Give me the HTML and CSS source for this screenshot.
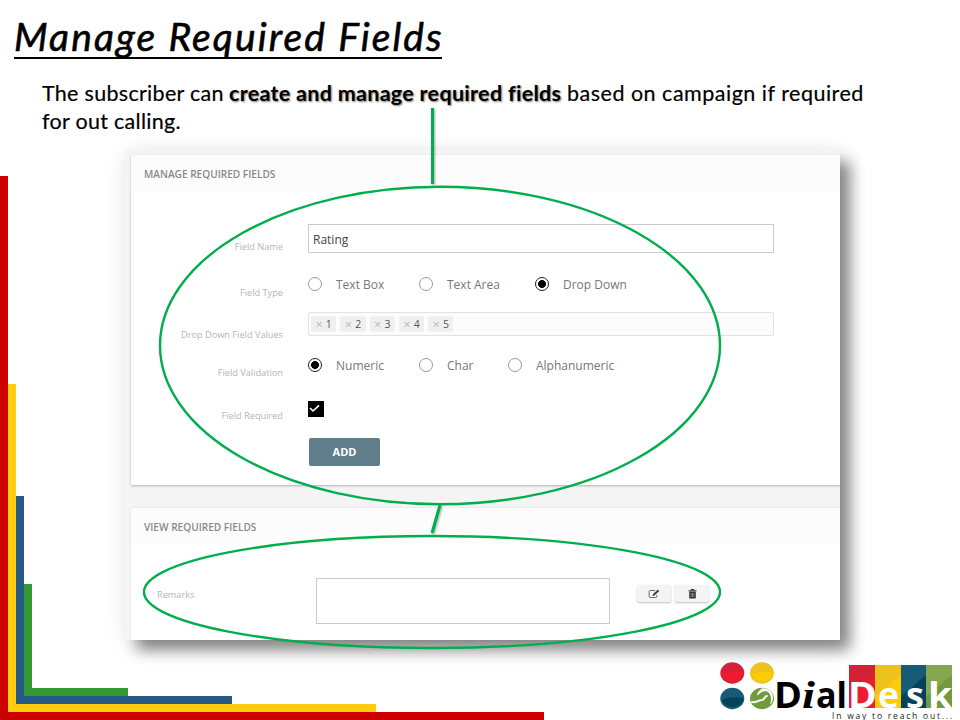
FILE: index.html
```html
<!DOCTYPE html>
<html lang="en">
<head>
<meta charset="utf-8">
<title>Manage Required Fields</title>
<link rel="stylesheet" href="styles.css">
</head>
<body>
<div class="slide">
  <main class="content">
    <h1 class="title"><span>Manage Required Fields</span></h1>
    <div class="intro">
      <p class="line first"><span class="i1">The subscriber can</span><strong>create and manage required fields</strong><span class="i3">based on campaign if required</span></p>
      <p class="line"><span class="i4">for out calling.</span></p>
    </div>
    <div class="shot">
      <section class="card">
        <h2 class="card-head"><span class="h-manage">MANAGE REQUIRED FIELDS</span></h2>
        <div class="form">
          <div class="row r-name"><label>Field Name</label><div class="input">Rating</div></div>
          <div class="row r-type"><label>Field Type</label>
            <div class="radios"><i class="radio"></i><span class="o1">Text Box</span><i class="radio"></i><span class="o2">Text Area</span><i class="radio on"></i><span>Drop Down</span></div></div>
          <div class="row r-values"><label>Drop Down Field Values</label>
            <div class="tags"><span><b>×</b>1</span><span><b>×</b>2</span><span><b>×</b>3</span><span><b>×</b>4</span><span><b>×</b>5</span></div></div>
          <div class="row r-valid"><label>Field Validation</label>
            <div class="radios"><i class="radio on"></i><span class="o1">Numeric</span><i class="radio"></i><span class="o3">Char</span><i class="radio"></i><span>Alphanumeric</span></div></div>
          <div class="row r-req"><label>Field Required</label>
            <svg class="check" width="16" height="16" viewBox="0 0 16 16"><path d="M0 0h16v16H0z"/><path d="M2 7l3 3 6-5.7" fill="none" stroke="#fff" stroke-width="1.6"/></svg></div>
          <div class="row r-add"><label></label><div class="add">ADD</div></div>
        </div>
      </section>
      <section class="card view">
        <h2 class="card-head"><span class="h-view">VIEW REQUIRED FIELDS</span></h2>
        <div class="remarks">
          <label>Remarks</label>
          <div class="area"></div>
          <div class="btn"><svg width="12" height="10" viewBox="0 0 12 10"><path d="M7 1.5H2.2a1 1 0 0 0-1 1v5a1 1 0 0 0 1 1h5.6a1 1 0 0 0 1-1V6" fill="none" stroke="#666" stroke-width="1"/><path d="M4.5 7l.5-2L9.8.5l1.5 1.4L6.500 6.500z" fill="#444"/></svg></div>
          <div class="btn del"><svg width="9" height="10" viewBox="0 0 9 10"><path d="M3 1.300V.5h3v.8M.5 1.800h8" fill="none" stroke="#333"/><path d="M1.200 2.500h6.600v6.300q0 .7-.7.7H1.900q-.7 0-.7-.7z" fill="#333"/><path d="M3.100 4v4M4.500 4v4M5.900 4v4" stroke="#bbb" stroke-width=".6"/></svg></div>
        </div>
      </section>
    </div>
  </main>

  <div class="bar red"><div class="bar yellow"><div class="bar blue"><div class="bar green"></div></div></div></div>

  <svg class="marks" width="960" height="720" viewBox="0 0 960 720">
    <g class="lines"><path d="M432.500 108V184"/><path d="M440 505L432 533"/></g>
    <g class="rings"><ellipse cx="440" cy="345.500" rx="280" ry="158.800"/><ellipse cx="432" cy="592" rx="288" ry="56"/></g>
  </svg>

  <svg class="logo" width="240" height="60" viewBox="720 660 240 60">
    <defs>
      <linearGradient id="r" x2=".5" y2="1"><stop offset=".57" stop-color="#d42138"/><stop offset=".6" stop-color="#ee1c2e"/></linearGradient>
      <linearGradient id="y" x2=".5" y2="1"><stop offset=".57" stop-color="#edc21d"/><stop offset=".6" stop-color="#fecb09"/></linearGradient>
      <linearGradient id="b" x2=".5" y2="1"><stop offset=".57" stop-color="#185b77"/><stop offset=".6" stop-color="#04415d"/></linearGradient>
      <linearGradient id="g" x2=".5" y2="1"><stop offset=".57" stop-color="#86a750"/><stop offset=".6" stop-color="#719a3d"/></linearGradient>
    </defs>
    <ellipse cx="732.300" cy="673" rx="12" ry="10.700" fill="#d42138"/>
    <ellipse cx="762" cy="673" rx="12" ry="10.700" fill="#edc21d"/>
    <ellipse cx="732.300" cy="698.500" rx="12" ry="10.700" fill="#185b77"/>
    <ellipse cx="762" cy="698.500" rx="12" ry="10.700" fill="#719a3d"/>
    <path d="M722 674q10-4 21-1c-1 11-19 12-21 1z" fill="#ee1c2e"/><path d="M752 674q10-4 21-1c-1 11-19 12-21 1z" fill="#fecb09"/><path d="M722 699.500q10-4 21-1c-1 11-19 12-21 1z" fill="#04415d"/>
    <path d="M762 688.500c6-1 11 3 11 9 0 3-1 6-3 7 2-5 1-11-3-13-5-1-7 2-10 4 0-3 2-5 5-7z" fill="#f4f7ef"/>
    <path d="M752 702c4 1 6-2 10-2 4-1 2-4 5-4" fill="none" stroke="#edf3e5" stroke-width="2.200" stroke-linecap="round"/>
    <path d="M849 665h26v43h-26z" fill="url(#r)"/><path d="M875 665h26v43h-26z" fill="url(#y)"/><path d="M901 665h25v43h-25z" fill="url(#b)"/><path d="M926 665h26v43h-26z" fill="url(#g)"/>
    <g class="word"><text x="774" y="708" textLength="28" lengthAdjust="spacingAndGlyphs">D</text><text class="it" x="802" y="708" textLength="13" lengthAdjust="spacingAndGlyphs">i</text><text x="816" y="708" textLength="31" lengthAdjust="spacingAndGlyphs">al</text>
    <text class="w" x="848" y="708" textLength="29" lengthAdjust="spacingAndGlyphs">D</text><text class="w" x="878" y="708" textLength="21" lengthAdjust="spacingAndGlyphs">e</text><text class="w" x="906" y="708" textLength="18" lengthAdjust="spacingAndGlyphs">s</text><text class="w" x="928" y="708" textLength="24" lengthAdjust="spacingAndGlyphs">k</text></g>
    <text class="tagline" x="832" y="718.500" textLength="120">In way to reach out...</text>
  </svg>
</div>
</body>
</html>
```
FILE: styles.css
```css
* { box-sizing: border-box; }
body { margin: 0; background: #fff; }
.slide { position: relative; width: 960px; height: 720px; overflow: hidden; background: #fff; font-family: "Open Sans", sans-serif; }
h1, h2, p { margin: 0; font-weight: 400; }
.content { display: flex; flex-direction: column; height: 720px; }

.title { width: 428px; height: 59px; margin-left: 14px; border-bottom: 2px solid #000; color: #000; }
.title span { display: block; width: max-content; padding-top: 11px; font: italic 400 39px/50px Lato, sans-serif; letter-spacing: 2.100px; -webkit-text-stroke: .6px #000; white-space: nowrap; }

.intro { height: 91px; padding: 20px 0 0 42px; color: #000; font: 22px/28px Lato, sans-serif; }
.line { display: flex; height: 28px; white-space: nowrap; }
.line span, .line strong { flex: none; font-size: 21.500px; letter-spacing: .5px; -webkit-text-stroke: .2px #000; }
.line .i1, .line .i4 { letter-spacing: .3px; }
.i1 { width: 187px; }
.line strong { width: 338px; font-weight: 700; letter-spacing: .3px; -webkit-text-stroke: 0; text-shadow: 1px 1px 2px #777; }

.shot { flex: none; width: 715px; height: 490px; margin-left: 125px; padding: 5px 0 0 6px; background: #f4f4f4; box-shadow: 11px 11px 14px -1px rgba(0,0,0,.45), 2px 3px 22px rgba(0,0,0,.11); }
.card { height: 330px; background: #fff; box-shadow: 0 1px 2px rgba(0,0,0,.28); clip-path: inset(-2px 0 -4px -2px); }
.card.view { height: 132px; margin-top: 23px; box-shadow: 0 0 2px rgba(0,0,0,.1); clip-path: inset(-2px 0 0 -2px); }
.card-head { height: 36px; padding-left: 13px; background: #fcfcfc; color: #888; font-size: 10.100px; line-height: 38px; font-weight: 600; }
.card-head span { display: inline-block; white-space: nowrap; }

.form { padding-top: 33px; }
.row { display: grid; grid-template-columns: 152px 466px; column-gap: 25px; }
label { color: #b5b5b5; font-size: 9.200px; line-height: 12px; text-align: right; white-space: nowrap; }
.r-name { height: 50px; } .r-name label { padding-top: 17px; }
.r-type { height: 38px; } .r-type label { padding-top: 13px; }
.r-values { height: 43px; } .r-values label { padding-top: 17px; }
.r-valid { height: 45px; } .r-valid label { padding-top: 12px; }
.r-req { height: 38px; } .r-req label { padding-top: 10px; }
.input { height: 29px; padding-left: 4px; border: 1px solid #ccc; color: #444; font-size: 12px; line-height: 29px; }
.radios { display: flex; align-items: center; height: 20px; color: #777; font-size: 12px; line-height: 20px; }
.radio { flex: none; width: 14px; height: 14px; margin-right: 14px; border: 1px solid #999; border-radius: 50%; }
.radio.on { border-color: #222; background: radial-gradient(circle, #000 0 3.600px, #fff 4.300px); }
.radios span { padding-top: 2px; white-space: nowrap; }
.o1 { width: 83px; } .o2 { width: 88px; } .o3 { width: 61px; }
.tags { display: flex; gap: 4px; height: 24px; padding: 3px 2px; border: 1px solid #e2e2e2; border-radius: 2px; background: #fcfcfc; }
.tags span { display: flex; justify-content: center; gap: 3px; width: 25.300px; height: 16px; border-radius: 2px; background: #f0f0f0; color: #555; font-size: 10.500px; line-height: 17px; }
.tags b { color: #bbb; font-size: 13px; font-weight: 400; line-height: 16px; }
.check { margin-top: 1px; }
.add { width: 71px; height: 28px; margin-left: 1px; border-radius: 2px; background: #607d8b; color: #fff; font-size: 11px; font-weight: 700; line-height: 28px; text-align: center; }

.remarks { display: flex; align-items: flex-start; padding: 34px 0 0 26px; }
.remarks label { width: 159px; padding-top: 11px; text-align: left; }
.area { width: 294px; height: 46px; border: 1px solid #ccc; }
.btn { display: flex; align-items: center; justify-content: center; width: 34px; height: 17px; margin: 7px 0 0 27px; border-radius: 2px; background: #f4f4f4; box-shadow: 0 1px 2px rgba(0,0,0,.25); }
.btn.del { margin-left: 4px; }

.bar { display: flex; align-items: flex-end; border: 0 solid; border-left-width: 8px; border-bottom-width: 8px; flex: none; }
.red { position: absolute; left: 0; bottom: 0; width: 544px; height: 544px; border-color: #c00; }
.yellow { width: 368px; height: 328px; border-color: #fc1; }
.blue { width: 216px; height: 208px; border-color: #265a84; }
.green { width: 104px; height: 112px; border-color: #393; }

.marks { position: absolute; left: 0; top: 0; fill: none; stroke: #00ae4d; pointer-events: none; }
.lines { stroke-width: 3; filter: drop-shadow(1px 1px 1px rgba(0,0,0,.35)); }
.rings { stroke-width: 2.400; }
.logo { position: absolute; right: 0; bottom: 0; }
.word { font: 700 35px "Open Sans", sans-serif; fill: #000; }
.word .it { font-family: "Liberation Serif", serif; font-style: italic; font-size: 38px; }
.word .w { fill: #fff; }
.tagline { font: 8.500px "Open Sans", sans-serif; fill: #222; }
```
